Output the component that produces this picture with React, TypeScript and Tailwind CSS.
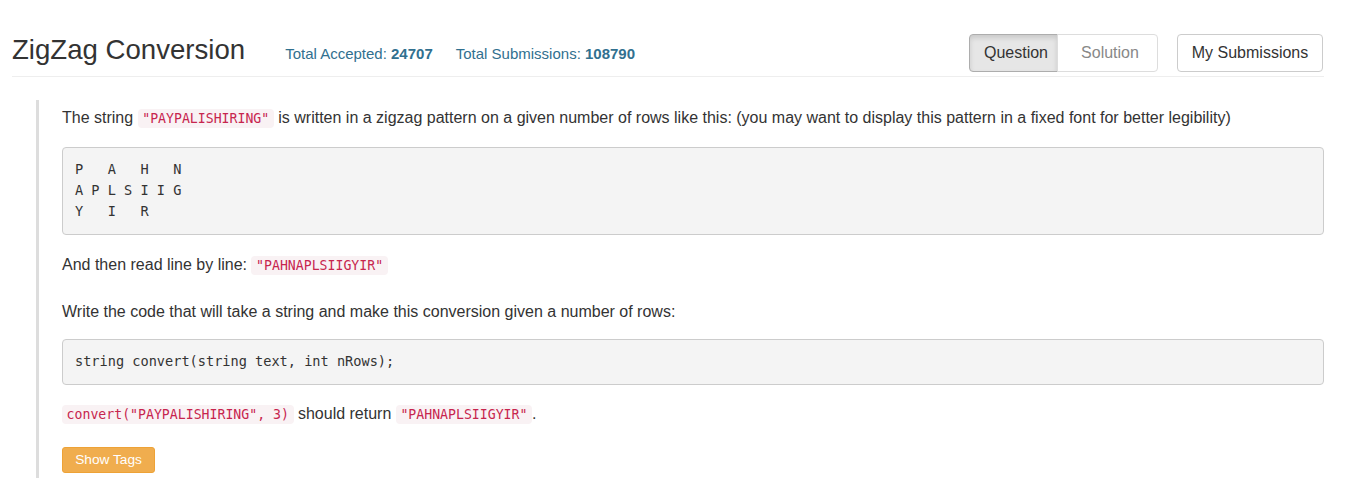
import React from 'react';

const InlineCode: React.FC<{ children: React.ReactNode }> = ({ children }) => (
  <code className="rounded-[4px] bg-[#f9f2f4] px-[4.6px] py-[2.3px] font-['DejaVu_Sans_Mono',monospace] text-[13.2px] text-[#c7254e]">
    {children}
  </code>
);

const Pre: React.FC<{ children: React.ReactNode }> = ({ children }) => (
  <pre className="whitespace-pre rounded-[4px] border border-[#ccc] bg-[#f4f4f4] px-[12px] py-[11.5px] font-['DejaVu_Sans_Mono',monospace] text-[13.6px] leading-[21px] text-[#333]">
    {children}
  </pre>
);

export default function App() {
  return (
    <div className="min-h-[500px] bg-white font-['Liberation_Sans',Arial,sans-serif] text-[#333]">
      <div className="pl-[12px] pr-[45px] pt-[34px]">
        {/* Header */}
        <div className="flex items-start justify-between border-b border-[#eee] pb-[4px]">
          <div className="flex items-baseline pt-[1px]">
            <h3 className="text-[27.6px] leading-[30px] font-normal text-[#333]">ZigZag Conversion</h3>
            <span className="ml-[40px] text-[15px] text-[#31708f]">
              Total Accepted: <strong className="font-bold">24707</strong>
            </span>
            <span className="ml-[23px] text-[15px] text-[#31708f]">
              Total Submissions: <strong className="font-bold">108790</strong>
            </span>
          </div>
          <div className="flex items-center gap-[19px] pr-[1px]">
            <div className="flex">
              <button className="flex h-[38px] w-[89px] items-center justify-center rounded-l-[4px] border border-[#adadad] bg-[#e6e6e6] pl-[5px] text-[16px] text-[#333] shadow-[inset_0_3px_5px_rgba(0,0,0,0.125)]">
                Question
              </button>
              <button className="-ml-px flex h-[38px] w-[101px] items-center justify-center rounded-r-[4px] border border-[#ddd] bg-white pl-[5px] text-[16px] text-[#888]">
                Solution
              </button>
            </div>
            <button className="flex h-[38px] w-[146px] items-center justify-center rounded-[4px] border border-[#ccc] bg-white text-[16px] text-[#333]">
              My Submissions
            </button>
          </div>
        </div>

        {/* Question body */}
        <div className="ml-[24px] mt-[23px] border-l-[3px] border-[#ddd] pb-[5px] pl-[23px] pt-[6px] text-[16px] leading-[23px]">
          <p className="mb-[16.5px]">
            The string <InlineCode>"PAYPALISHIRING"</InlineCode> is written in a zigzag pattern on a given number of rows like this: (you may want to display this pattern in a fixed font for better legibility)
          </p>
          <div className="mb-[18.5px]">
            <Pre>{'P   A   H   N\nA P L S I I G\nY   I   R'}</Pre>
          </div>
          <p className="mb-[23px]">
            And then read line by line: <InlineCode>"PAHNAPLSIIGYIR"</InlineCode>
          </p>
          <p className="mb-[15.5px]">Write the code that will take a string and make this conversion given a number of rows:</p>
          <div className="mb-[17.5px]">
            <Pre>string convert(string text, int nRows);</Pre>
          </div>
          <p className="mb-[20.5px]">
            <InlineCode>convert("PAYPALISHIRING", 3)</InlineCode> should return <InlineCode>"PAHNAPLSIIGYIR"</InlineCode>.
          </p>
          <button className="flex h-[26px] w-[93px] items-center justify-center rounded-[3px] border border-[#eea236] bg-[#f0ad4e] text-[13.7px] text-white">
            Show Tags
          </button>
        </div>
      </div>
    </div>
  );
}
